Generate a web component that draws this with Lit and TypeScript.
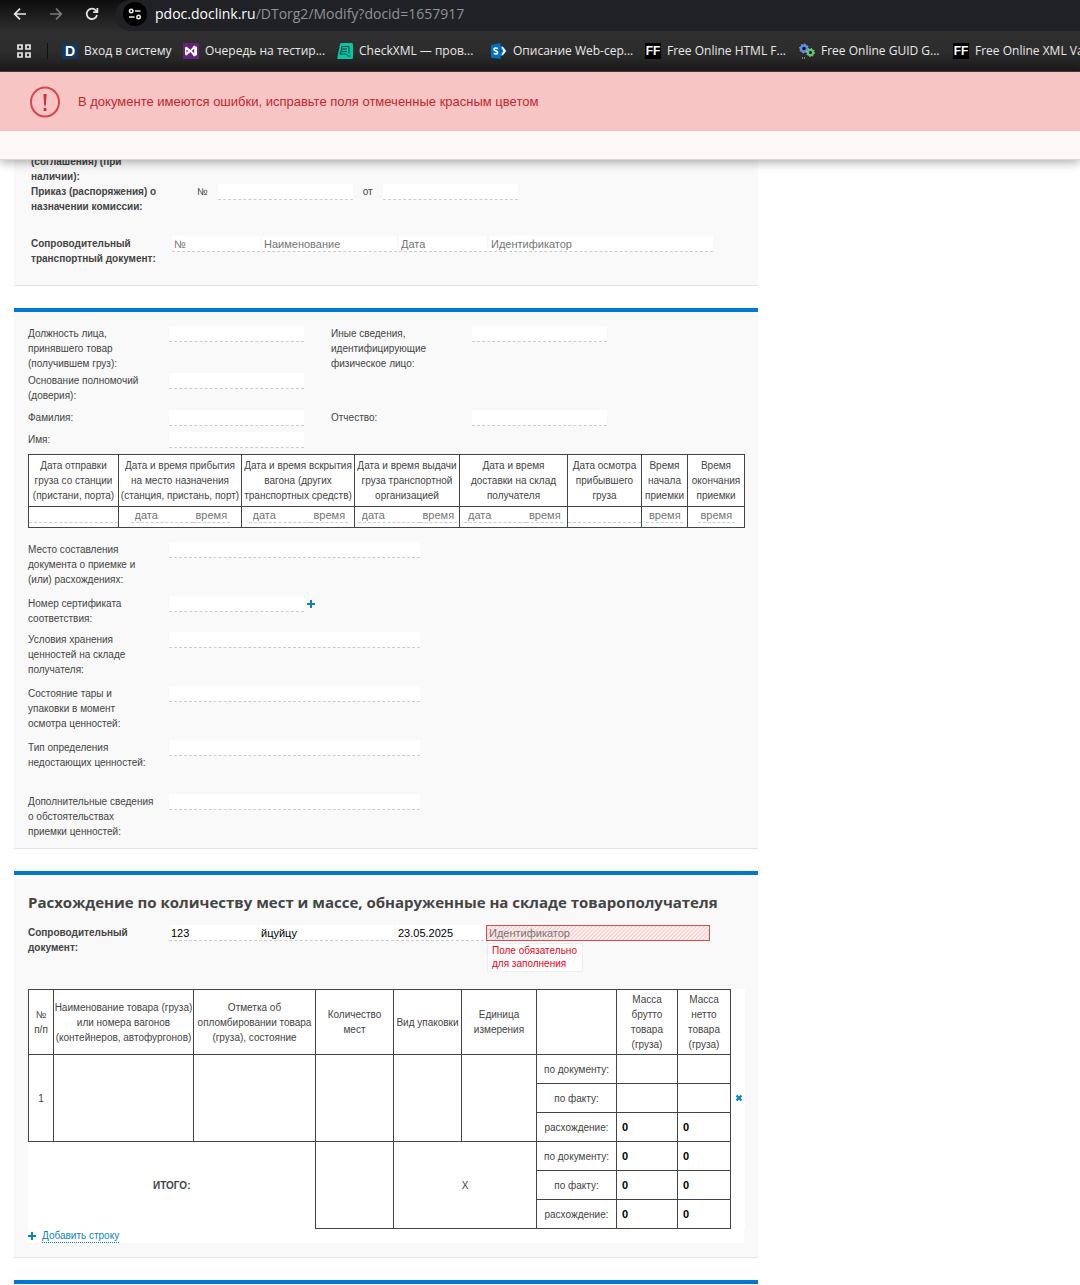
import { LitElement, html, css, svg, nothing, TemplateResult } from "lit";
import { customElement } from "lit/decorators.js";

interface Bookmark {
  title: string;
  icon: TemplateResult;
}

const ffIcon = html`<span class="ff" aria-hidden="true">FF</span>`;

const bookmarks: Bookmark[] = [
  {
    title: "Вход в систему",
    icon: html`<span class="fav-d" aria-hidden="true">D</span>`,
  },
  {
    title: "Очередь на тестир...",
    icon: html`<svg width="16" height="16" viewBox="0 0 16 16" aria-hidden="true">
      <rect width="16" height="16" fill="#68217a" />
      <path d="M2 4.5 L3.5 3.5 L7.5 7 L11 2.5 L14 4 V12 L11 13.5 L7.5 9 L3.5 12.5 L2 11.5 Z" fill="#fff" />
      <path d="M3.4 6.4 L5.2 8 L3.4 9.6 Z M11.2 5.8 V10.2 L8.8 8 Z" fill="#68217a" />
    </svg>`,
  },
  {
    title: "CheckXML — пров...",
    icon: html`<svg width="16" height="16" viewBox="0 0 16 16" aria-hidden="true">
      <path d="M4.5 0 H14.5 Q16 0 16 1.5 V14.5 Q16 16 14.5 16 H1 Q0 16 0.3 14.8 L3 1.2 Q3.3 0 4.5 0 Z" fill="#00c9a7" />
      <path d="M4.5 3.5 H12 V10.5 M5 6 H10 M4.5 8.5 H10 M2.5 11 H9.5 Q9.8 13 11.5 13 H13.5 M5 3.5 L3.5 11" fill="none" stroke="#123b38" />
    </svg>`,
  },
  {
    title: "Описание Web-сер...",
    icon: html`<svg width="16" height="16" viewBox="0 0 16 16" aria-hidden="true">
      <path d="M0 2 L9.5 0 V16 L0 14.4 Z" fill="#0072c6" />
      <path d="M9.5 3 H11.5 L15.5 8 L11.5 13 H9.5 V10.5 L11 8 L9.5 5.5 Z" fill="#1a8ae0" />
      <path d="M10.5 4 L12 4 L15 8 L12 12 L10.5 12 L12.5 8 Z" fill="#fff" />
      <path d="M6.8 5.4 Q3 4.2 3 6.3 Q3 7.4 5 8 Q6.8 8.6 6.6 9.9 Q6 11.5 2.8 10.6" fill="none" stroke="#fff" stroke-width="1.6" />
    </svg>`,
  },
  { title: "Free Online HTML F...", icon: ffIcon },
  {
    title: "Free Online GUID G...",
    icon: html`<svg width="16" height="16" viewBox="0 0 16 16" aria-hidden="true">
      <circle cx="5" cy="5.5" r="3" fill="#111" stroke="#5b8ee6" stroke-width="2.4" />
      <circle cx="5" cy="5.5" r="4.4" fill="none" stroke="#9fbcf0" stroke-width="1" stroke-dasharray="1.4 2" />
      <circle cx="11.5" cy="9.5" r="2.6" fill="#111" stroke="#58c472" stroke-width="2.2" />
      <circle cx="11.5" cy="9.5" r="4" fill="none" stroke="#9be0ab" stroke-width="1" stroke-dasharray="1.3 1.8" />
      <path d="M3 15 H4 M5 15 H6" stroke="#ddd" />
    </svg>`,
  },
  { title: "Free Online XML Validator", icon: ffIcon },
];

const plusIcon = svg`<svg width="8" height="8" viewBox="0 0 8 8" aria-hidden="true"><path d="M3 0 H5 V3 H8 V5 H5 V8 H3 V5 H0 V3 H3 Z" fill="#0a84c6"/></svg>`;
const crossIcon = svg`<svg width="8" height="8" viewBox="0 0 8 8" aria-hidden="true"><path d="M1.5 1.5 L6.5 6.5 M6.5 1.5 L1.5 6.5" stroke="#0a84c6" stroke-width="2.4"/></svg>`;

const details = [
  { id: "place", label: "Место составления документа о приемке и (или) расхождениях:" },
  { id: "cert", label: "Номер сертификата соответствия:" },
  { id: "storage", label: "Условия хранения ценностей на складе получателя:" },
  { id: "pack", label: "Состояние тары и упаковки в момент осмотра ценностей:" },
  { id: "method", label: "Тип определения недостающих ценностей:" },
  { id: "extra", label: "Дополнительные сведения о обстоятельствах приемки ценностей:" },
];

type CellKind = "single" | "pair" | "time";

const timing: { head: string; kind: CellKind }[] = [
  { head: "Дата отправки груза со станции (пристани, порта)", kind: "single" },
  { head: "Дата и время прибытия на место назначения (станция, пристань, порт)", kind: "pair" },
  { head: "Дата и время вскрытия вагона (других транспортных средств)", kind: "pair" },
  { head: "Дата и время выдачи груза транспортной организацией", kind: "pair" },
  { head: "Дата и время\nдоставки на склад получателя", kind: "pair" },
  { head: "Дата осмотра прибывшего груза", kind: "single" },
  { head: "Время начала приемки", kind: "time" },
  { head: "Время окончания приемки", kind: "time" },
];

const goodsHead = [
  "№\nп/п",
  "Наименование товара (груза) или номера вагонов (контейнеров, автофургонов)",
  "Отметка об опломбировании товара (груза), состояние",
  "Количество мест",
  "Вид упаковки",
  "Единица измерения",
  "",
  "Масса брутто товара (груза)",
  "Масса нетто товара (груза)",
];

@customElement("app-root")
export class AppRoot extends LitElement {
  static styles = css`
    :host {
      display: block;
      background: #fff;
      color: #444;
      font: 10px/15px "Liberation Sans", Arial, sans-serif;
      overflow: hidden;
    }
    * {
      box-sizing: border-box;
    }
    svg {
      display: block;
    }
    button {
      border: 0;
      padding: 0;
      background: none;
      color: inherit;
      font: inherit;
      cursor: pointer;
    }

    /* browser chrome */
    .chrome {
      background: linear-gradient(#0d0d0d, #2f2f2f 32px, #2c2c2c 52px, #1b1b1b);
      border-bottom: 1px solid #444;
      color: #e8e8e8;
      font-family: "Open Sans", "Noto Sans", sans-serif;
    }
    .toolbar {
      display: flex;
      align-items: center;
      height: 31px;
      padding: 0 0 3px 12px;
    }
    .toolbar .nav {
      width: 36px;
    }
    .address {
      display: flex;
      flex: 1;
      align-items: center;
      gap: 8px;
      height: 31px;
      margin: 0 0 -3px -5px;
      padding: 0 0 3px 8px;
      border-radius: 16px 0 0 16px;
      background: #202124;
      color: #8f9296;
      font-size: 14px;
      line-height: 20px;
    }
    .site {
      display: grid;
      place-items: center;
      width: 24px;
      height: 24px;
      border-radius: 50%;
      background: #000;
    }
    .host {
      color: #fff;
    }
    .bookmarks {
      display: flex;
      align-items: center;
      height: 40px;
      padding-left: 16px;
      overflow: hidden;
      white-space: nowrap;
      font-size: 12px;
      line-height: 16px;
    }
    .apps {
      padding-right: 15px;
      margin-right: 14px;
      border-right: 1px solid #111;
    }
    .bookmark {
      display: flex;
      flex: 0 0 154px;
      gap: 6px;
      color: inherit;
      text-decoration: none;
    }
    .bookmark:nth-child(2) {
      flex-basis: 121px;
    }
    .fav-d,
    .ff {
      flex: none;
      width: 16px;
      height: 16px;
      background: #14375e;
      color: #fff;
      font: bold 14px/16px "Liberation Sans", Arial, sans-serif;
      text-align: center;
    }
    .ff {
      background: #000;
      font-size: 12px;
    }

    /* alert */
    .notice {
      position: relative;
      z-index: 1;
      border-bottom: 1px solid #ddd9d9;
      background: #fcf8f7;
      box-shadow: 0 2px 10px rgba(0, 0, 0, 0.35);
    }
    .alert {
      display: flex;
      align-items: center;
      gap: 18px;
      height: 59px;
      margin-bottom: 28px;
      padding-left: 30px;
      background: #f7c5c4;
      color: #c4262e;
      font-size: 13px;
    }

    /* form panels */
    .panel {
      max-width: 744px;
      margin: 0 14px 22px;
      padding: 14px;
      border-top: 4px solid #0078d2;
      border-bottom: 1px solid #e5e5e5;
      background: #f9f9f9;
    }
    .panel.first {
      margin-top: -6px;
      padding: 0 17px 13px;
      border-top: 0;
    }
    .panel.acceptance {
      padding-bottom: 0;
    }
    .panel.next {
      margin-bottom: 0;
      padding: 1px 0 0;
      border-bottom: 0;
    }
    .row {
      display: flex;
      align-items: flex-start;
      min-height: 54px;
    }
    .row.medium {
      min-height: 52px;
    }
    .row.short {
      min-height: 36px;
    }
    .label {
      flex: none;
      width: 141px;
      padding-right: 14px;
    }
    .strong {
      font-weight: bold;
    }
    .field {
      width: 135px;
      height: 16px;
      padding: 0 2px;
      border: 0;
      border-bottom: 1px dashed #ccc;
      border-radius: 0;
      background: #fff;
      color: #000;
      font: 11px/15px "Liberation Sans", Arial, sans-serif;
      outline: 0;
    }
    .field::placeholder {
      color: #757575;
      opacity: 1;
    }
    .field.wide {
      width: 251px;
    }
    .field.num {
      width: 88px;
    }
    .field.ident {
      width: 224px;
    }
    .field.invalid {
      border: 1px solid #d64c50;
      background: linear-gradient(135deg, #f8d6d6 25%, #fdeeee 25% 50%, #f8d6d6 50% 75%, #fdeeee 75%) 0 0 / 4px 4px;
    }
    .order {
      display: flex;
      gap: 10px;
      padding-left: 25px;
    }
    .docs {
      display: flex;
      gap: 2px;
    }
    .person {
      display: grid;
      grid-template-columns: 141px 135px 27px 141px 135px;
      grid-template-rows: minmax(47px, auto) 37px 22px 22px;
      align-items: start;
    }
    .person .left {
      grid-column: 1;
    }
    .person .right {
      grid-column: 4;
    }
    .add {
      margin: 4px 0 0 3px;
    }

    table {
      width: 100%;
      border-collapse: collapse;
      table-layout: fixed;
      background: #fff;
    }
    th,
    td {
      padding: 0;
      border: 1px solid #444;
      font-weight: normal;
      text-align: center;
      white-space: pre-line;
    }
    .timing {
      margin-bottom: 14px;
    }
    .timing th {
      height: 52px;
    }
    .timing td {
      height: 21px;
      padding-top: 1px;
      vertical-align: top;
    }
    .cell {
      display: flex;
      justify-content: center;
    }
    .cell .field {
      height: 15px;
      background: none;
    }
    .cell .day {
      width: 62px;
      padding-left: 4px;
    }
    .cell .hour {
      width: 37px;
      padding-left: 3px;
    }
    .cell .full {
      width: 100%;
    }

    h2 {
      margin: 1px 0 11px;
      font: bold 15px/24px "Open Sans", "Noto Sans", sans-serif;
    }
    .row.source {
      min-height: 64px;
    }
    .checked {
      position: relative;
    }
    .hint {
      position: absolute;
      top: 18px;
      left: 1px;
      width: 96px;
      padding: 0 4px 1px;
      border: 1px solid #eee;
      background: #fff;
      color: #f00018;
      line-height: 13px;
    }
    .goods-box {
      background: #fff;
    }
    .goods th {
      height: 65px;
    }
    .goods td {
      height: 29px;
    }
    .goods .off {
      border: 0;
    }
    .goods .num-cell {
      padding: 0 5px;
    }
    .goods .value {
      display: block;
      width: 100%;
      height: 100%;
      padding: 0;
      border: 0;
      background: none;
      color: #000;
      font: bold 11px/15px "Liberation Sans", Arial, sans-serif;
      outline: 0;
    }
    .remove {
      display: block;
      margin-left: 4px;
    }
    .add-row {
      display: flex;
      align-items: center;
      gap: 6px;
      height: 14px;
      color: #0a84c6;
    }
    .add-row span {
      border-bottom: 1px dotted #0a84c6;
      line-height: 12px;
    }
  `;

  private chrome() {
    return html`
      <header class="chrome">
        <div class="toolbar">
          <button class="nav" aria-label="Назад">
            <svg width="16" height="16" viewBox="0 0 16 16" fill="none" stroke="#e8e8e8" stroke-width="1.7">
              <path d="M14 8 H3 M8 2.7 L2.7 8 L8 13.3" />
            </svg>
          </button>
          <button class="nav" aria-label="Вперёд">
            <svg width="16" height="16" viewBox="0 0 16 16" fill="none" stroke="#77797c" stroke-width="1.7">
              <path d="M2 8 H13 M8 2.7 L13.3 8 L8 13.3" />
            </svg>
          </button>
          <button class="nav" aria-label="Обновить">
            <svg width="16" height="16" viewBox="0 0 16 16" fill="none" stroke="#e8e8e8" stroke-width="1.7">
              <path d="M13 9 A5.2 5.2 0 1 1 11.8 4.4 L13.3 6" />
              <path d="M13.4 2 V6.2 H9.2" />
            </svg>
          </button>
          <div class="address">
            <button class="site" aria-label="Сведения о сайте">
              <svg width="14" height="12" viewBox="0 0 14 12" fill="none" stroke="#e8e8e8" stroke-width="1.6">
                <circle cx="3.2" cy="3" r="1.7" />
                <path d="M7 3 H12.5 M1 9 H6.5" />
                <circle cx="10.6" cy="9" r="1.7" />
              </svg>
            </button>
            <div><span class="host">pdoc.doclink.ru</span>/DTorg2/Modify?docid=1657917</div>
          </div>
        </div>
        <nav class="bookmarks">
          <button class="apps" aria-label="Приложения">
            <svg width="16" height="16" viewBox="0 0 16 16" fill="none" stroke="#e8e8e8" stroke-width="1.7">
              <path d="M2 2 H6 V6 H2 Z M10 2 H14 V6 H10 Z M2 10 H6 V14 H2 Z M10 10 H14 V14 H10 Z" />
            </svg>
          </button>
          ${bookmarks.map((b) => html`<a class="bookmark" href="#">${b.icon}<span>${b.title}</span></a>`)}
        </nav>
      </header>
    `;
  }

  private timingCell(kind: CellKind, head: string) {
    if (kind === "single") return html`<input class="field full" aria-label=${head} />`;
    const hour = html`<input class="field hour" placeholder="время" aria-label=${head} />`;
    return kind === "time" ? hour : html`<input class="field day" placeholder="дата" aria-label=${head} />${hour}`;
  }

  private measures(kind: string, gross: string, net: string) {
    return html`
      <td>${kind}:</td>
      <td class="num-cell"><input class="value" aria-label="Масса брутто, ${kind}" .value=${gross} /></td>
      <td class="num-cell"><input class="value" aria-label="Масса нетто, ${kind}" .value=${net} /></td>
    `;
  }

  render() {
    return html`
      ${this.chrome()}
      <div class="notice">
        <div class="alert" role="alert">
          <svg width="30" height="32" viewBox="0 0 30 32" aria-hidden="true">
            <ellipse cx="15" cy="16" rx="14" ry="14.5" fill="none" stroke="#d8454c" stroke-width="2" />
            <path d="M13.4 8 H16.6 L15.8 19.5 H14.2 Z M13.6 22 H16.4 V25 H13.6 Z" fill="#cf3038" />
          </svg>
          <span>В документе имеются ошибки, исправьте поля отмеченные красным цветом</span>
        </div>
      </div>

      <main>
        <section class="panel first">
          <div class="label strong">(соглашения) (при наличии):</div>
          <div class="row medium">
            <div class="label strong">Приказ (распоряжения) о назначении комиссии:</div>
            <div class="order">
              <label for="order-no">№</label>
              <input class="field" id="order-no" />
              <label for="order-date">от</label>
              <input class="field" id="order-date" />
            </div>
          </div>
          <div class="row short">
            <div class="label strong">Сопроводительный транспортный документ:</div>
            <div class="docs">
              <input class="field num" placeholder="№" aria-label="№" />
              <input class="field" placeholder="Наименование" aria-label="Наименование" />
              <input class="field num" placeholder="Дата" aria-label="Дата" />
              <input class="field ident" placeholder="Идентификатор" aria-label="Идентификатор" />
            </div>
          </div>
        </section>

        <section class="panel acceptance">
          <div class="person">
            <label class="label left" for="post">Должность лица, принявшего товар (получившем груз):</label>
            <input class="field" id="post" />
            <label class="label right" for="other">Иные сведения, идентифицирующие физическое лицо:</label>
            <input class="field" id="other" />
            <label class="label left" for="basis">Основание полномочий (доверия):</label>
            <input class="field" id="basis" />
            <label class="label left" for="surname">Фамилия:</label>
            <input class="field" id="surname" />
            <label class="label right" for="patronymic">Отчество:</label>
            <input class="field" id="patronymic" />
            <label class="label left" for="name">Имя:</label>
            <input class="field" id="name" />
          </div>

          <table class="timing">
            <colgroup>
              ${[90, 123, 113, 105, 108, 74, 46, 57].map((w) => html`<col style="width:${w}px" />`)}
            </colgroup>
            <thead>
              <tr>${timing.map((t) => html`<th scope="col">${t.head}</th>`)}</tr>
            </thead>
            <tbody>
              <tr>${timing.map((t) => html`<td><div class="cell">${this.timingCell(t.kind, t.head)}</div></td>`)}</tr>
            </tbody>
          </table>

          ${details.map(
            (d) => html`
              <div class="row ${d.id === "cert" ? "short" : ""}">
                <label class="label" for=${d.id}>${d.label}</label>
                <input class="field ${d.id === "cert" ? "" : "wide"}" id=${d.id} />
                ${d.id === "cert" ? html`<button class="add" aria-label="Добавить сертификат">${plusIcon}</button>` : nothing}
              </div>
            `
          )}
        </section>

        <section class="panel">
          <h2>Расхождение по количеству мест и массе, обнаруженные на складе товарополучателя</h2>
          <div class="row source">
            <div class="label strong">Сопроводительный документ:</div>
            <div class="docs">
              <input class="field num" aria-label="№" .value=${"123"} />
              <input class="field" aria-label="Наименование" .value=${"йцуйцу"} />
              <input class="field num" aria-label="Дата" .value=${"23.05.2025"} />
              <div class="checked">
                <input class="field ident invalid" placeholder="Идентификатор" aria-label="Идентификатор" aria-describedby="hint" />
                <div class="hint" id="hint">Поле обязательно для заполнения</div>
              </div>
            </div>
          </div>

          <div class="goods-box">
            <table class="goods">
              <colgroup>
                ${[25, 140, 122, 78, 68, 75, 80, 61, 53, 14].map((w) => html`<col style="width:${w}px" />`)}
              </colgroup>
              <thead>
                <tr>
                  ${goodsHead.map((h) => html`<th scope="col">${h}</th>`)}
                  <td class="off"></td>
                </tr>
              </thead>
              <tbody>
                <tr>
                  <td rowspan="3">1</td>
                  <td rowspan="3"></td>
                  <td rowspan="3"></td>
                  <td rowspan="3"></td>
                  <td rowspan="3"></td>
                  <td rowspan="3"></td>
                  ${this.measures("по документу", "", "")}
                  <td class="off" rowspan="3"><button class="remove" aria-label="Удалить строку">${crossIcon}</button></td>
                </tr>
                <tr>${this.measures("по факту", "", "")}</tr>
                <tr>${this.measures("расхождение", "0", "0")}</tr>
                <tr>
                  <td class="off strong" rowspan="3" colspan="3">ИТОГО:</td>
                  <td rowspan="3"></td>
                  <td rowspan="3" colspan="2">X</td>
                  ${this.measures("по документу", "0", "0")}
                  <td class="off" rowspan="3"></td>
                </tr>
                <tr>${this.measures("по факту", "0", "0")}</tr>
                <tr>${this.measures("расхождение", "0", "0")}</tr>
              </tbody>
            </table>
            <button class="add-row">${plusIcon}<span>Добавить строку</span></button>
          </div>
        </section>

        <section class="panel next"></section>
      </main>
    `;
  }
}
